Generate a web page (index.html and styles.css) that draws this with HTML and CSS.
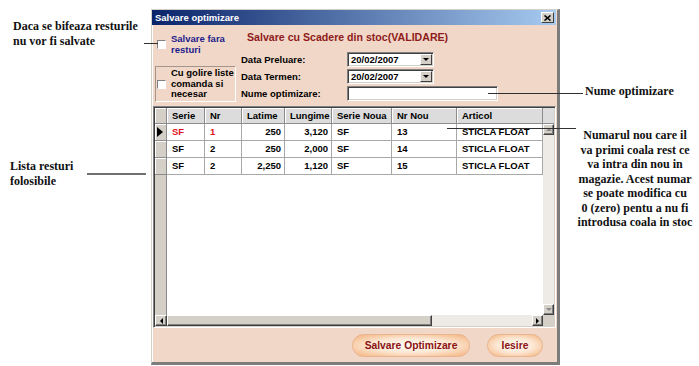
FILE: index.html
```html
<!DOCTYPE html>
<html lang="ro">
<head>
    <meta charset="UTF-8">
    <meta name="viewport" content="width=device-width, initial-scale=1.0">
    <title>Salvare optimizare</title>
    <link rel="stylesheet" href="styles.css">
</head>
<body>
    <div class="page">
        <div class="notes-left">
            <p class="note note-check">Daca se bifeaza resturile<br>nu vor fi salvate</p>
            <p class="note note-list">Lista resturi<br>folosibile</p>
        </div>

        <div class="dialog">
            <div class="titlebar">
                <span class="title">Salvare optimizare</span>
                <span class="close">
                    <svg width="7" height="6" viewBox="0 0 7 6">
                        <path d="M0.5 0.5L6.5 5.5M6.5 0.5L0.5 5.5" stroke="#000" stroke-width="1.6"></path>
                    </svg>
                </span>
            </div>

            <div class="top">
                <div class="options">
                    <label class="check check-blue"><span class="box"></span><span>Salvare fara<br>resturi</span></label>
                    <div class="group">
                        <label class="check"><span class="box"></span><span>Cu golire liste<br>comanda si<br>necesar</span></label>
                    </div>
                </div>

                <div class="form">
                    <h2 class="heading">Salvare cu Scadere din stoc(VALIDARE)</h2>
                    <div class="fields">
                        <span class="label">Data Preluare:</span>
                        <div class="field combo"><span>20/02/2007</span><span class="drop"></span></div>
                        <span class="label">Data Termen:</span>
                        <div class="field combo"><span>20/02/2007</span><span class="drop"></span></div>
                        <span class="label">Nume optimizare:</span>
                        <div class="field text-field"></div>
                    </div>
                </div>
            </div>

            <div class="grid">
                <div class="grid-data">
                    <table class="rows">
                        <colgroup>
                            <col style="width: 12px">
                            <col style="width: 38px">
                            <col style="width: 37px">
                            <col style="width: 43px">
                            <col style="width: 47px">
                            <col style="width: 60px">
                            <col style="width: 65px">
                            <col style="width: 86px">
                        </colgroup>
                        <thead>
                            <tr>
                                <th class="sel"></th>
                                <th>Serie</th>
                                <th>Nr</th>
                                <th>Latime</th>
                                <th>Lungime</th>
                                <th>Serie Noua</th>
                                <th>Nr Nou</th>
                                <th>Articol</th>
                            </tr>
                        </thead>
                        <tbody>
                            <tr>
                                <td class="sel"><span class="pointer"></span></td>
                                <td class="red">SF</td>
                                <td class="red">1</td>
                                <td class="num">250</td>
                                <td class="num">3,120</td>
                                <td>SF</td>
                                <td>13</td>
                                <td>STICLA FLOAT</td>
                            </tr>
                            <tr>
                                <td class="sel"></td>
                                <td>SF</td>
                                <td>2</td>
                                <td class="num">250</td>
                                <td class="num">2,000</td>
                                <td>SF</td>
                                <td>14</td>
                                <td>STICLA FLOAT</td>
                            </tr>
                            <tr>
                                <td class="sel"></td>
                                <td>SF</td>
                                <td>2</td>
                                <td class="num">2,250</td>
                                <td class="num">1,120</td>
                                <td>SF</td>
                                <td>15</td>
                                <td>STICLA FLOAT</td>
                            </tr>
                        </tbody>
                    </table>
                </div>

                <div class="vscroll">
                    <div class="vhead"></div>
                    <span class="sb-btn"><span class="arr arr-up"></span></span>
                    <div class="track"></div>
                    <span class="sb-btn"><span class="arr arr-down"></span></span>
                </div>

                <div class="hscroll">
                    <span class="sb-btn sb-wide"><span class="arr arr-left"></span></span>
                    <div class="thumb"></div>
                    <div class="track"></div>
                    <span class="sb-btn"><span class="arr arr-right"></span></span>
                </div>

                <div class="corner"></div>
            </div>

            <div class="footer">
                <button class="pill pill-save">Salvare Optimizare</button>
                <button class="pill pill-exit">Iesire</button>
            </div>
        </div>

        <div class="notes-right">
            <p class="note note-name">Nume optimizare</p>
            <p class="note note-nr">Numarul nou care il<br>va primi coala rest ce<br>va intra din nou in<br>magazie. Acest numar<br>se poate modifica cu<br>0 (zero) pentu a nu fi<br>introdusa coala in stoc</p>
        </div>

        <!-- callout lines -->
        <div class="callout callout-check"></div>
        <div class="callout callout-name"></div>
        <div class="callout callout-nr"></div>
        <div class="callout callout-list"></div>
    </div>
</body>
</html>
```

FILE: styles.css
```css
* {
    margin: 0;
    padding: 0;
    box-sizing: border-box;
}

body {
    background: #fff;
    font-family: "Liberation Sans", Arial, sans-serif;
    color: #000;
}

.page {
    position: relative;
    display: flex;
    width: 699px;
    height: 366px;
    overflow: hidden;
}

/* annotations */
.note {
    font-family: "Liberation Serif", "Times New Roman", serif;
    font-weight: bold;
    font-size: 12px;
    line-height: 15px;
    color: #111;
    white-space: nowrap;
}

.notes-left {
    width: 151px;
    flex: none;
    padding-left: 10px;
}

.note-check {
    margin-top: 19px;
    margin-left: 3px;
}

.note-list {
    margin-top: 110px;
}

.notes-right {
    flex: 1;
    padding-left: 25px;
}

.note-name {
    margin-top: 84px;
}

.note-nr {
    margin-top: 29px;
    margin-left: -10px;
    width: 120px;
    text-align: center;
    line-height: 14.5px;
}

.callout {
    position: absolute;
    height: 1px;
    background: #303030;
}

.callout-check { left: 144px; top: 43px; width: 14px; }
.callout-name { left: 488px; top: 93px; width: 95px; }
.callout-nr { left: 447px; top: 128px; width: 129px; }
.callout-list { left: 87px; top: 173px; width: 59px; height: 2px; background: #707070; }

/* dialog window */
.dialog {
    flex: none;
    width: 409px;
    height: 356px;
    margin-top: 9px;
    display: flex;
    flex-direction: column;
    background: #f1d7c7;
    border-style: solid;
    border-width: 1px 3px 3px 1px;
    border-color: #d4d0c8 #7c7c7c #7c7c7c #d4d0c8;
    box-shadow: inset 1px 1px 0 #fff;
    font-size: 9.5px;
    font-weight: bold;
}

.titlebar {
    height: 15px;
    margin-right: 1px;
    display: flex;
    align-items: center;
    justify-content: space-between;
    padding: 0 2px 0 3px;
    background: linear-gradient(to right, #0a246a, #a6caf0);
}

.title {
    color: #fff;
    font-size: 9.5px;
}

.close {
    width: 13px;
    height: 11px;
    display: flex;
    align-items: center;
    justify-content: center;
    background: #d4d0c8;
    border: 1px solid;
    border-color: #fff #404040 #404040 #fff;
}

.top {
    height: 81px;
    flex: none;
    display: flex;
    padding-left: 3px;
}

.options {
    width: 82px;
    padding-top: 9px;
}

.check {
    display: flex;
    align-items: center;
    gap: 5px;
    line-height: 10.5px;
}

.check-blue {
    color: #1c1c8c;
}

.box {
    width: 9px;
    height: 9px;
    flex: none;
    margin-left: 2px;
    background: #fff;
    border: 1px solid;
    border-color: #808080 #fff #fff #808080;
}

.group {
    margin-top: 11px;
    width: 81px;
    height: 36px;
    display: flex;
    align-items: center;
    border: 1px solid;
    border-color: #a4948a #fff #fff #a4948a;
}

.group .box {
    margin-left: 1px;
}

.form {
    margin-left: 4px;
    padding-top: 6px;
}

.heading {
    margin-left: 6px;
    margin-bottom: 8px;
    font-size: 10.6px;
    line-height: 13px;
    color: #8e1b1b;
    white-space: nowrap;
}

.fields {
    display: grid;
    grid-template-columns: 106px auto;
    grid-auto-rows: 15px;
    row-gap: 2px;
    align-items: center;
}

.field {
    height: 15px;
    display: flex;
    align-items: center;
    background: #fff;
    border: 1px solid;
    border-color: #808080 #fff #fff #808080;
    box-shadow: inset 1px 1px 0 #404040, inset -1px -1px 0 #d4d0c8;
}

.combo {
    width: 87px;
    justify-content: space-between;
    padding: 0 1px 0 3px;
}

.text-field {
    width: 151px;
}

.drop {
    width: 12px;
    height: 11px;
    display: flex;
    align-items: center;
    justify-content: center;
    background: #d4d0c8;
    border: 1px solid;
    border-color: #fff #404040 #404040 #fff;
}

.drop::after {
    content: "";
    border-left: 3px solid transparent;
    border-right: 3px solid transparent;
    border-top: 3px solid #000;
}

/* data grid */
.grid {
    flex: none;
    margin-left: 1px;
    width: 403px;
    height: 222px;
    padding: 1px;
    display: grid;
    grid-template-columns: 388px 11px;
    grid-template-rows: 207px 11px;
    border: 1px solid;
    border-color: #808080 #fff #fff #808080;
    box-shadow: inset 1px 1px 0 #404040, inset -1px -1px 0 #d4d0c8;
}

.grid-data {
    overflow: hidden;
    background: linear-gradient(to right, #d4d0c8 11px, #8c8c8c 11px, #8c8c8c 12px, #fff 12px);
}

.rows {
    width: 388px;
    table-layout: fixed;
    border-collapse: separate;
    border-spacing: 0;
    font-size: 9.5px;
}

.rows th {
    padding: 0 5px;
    line-height: 15px;
    text-align: left;
    white-space: nowrap;
    overflow: hidden;
    background: #dcdcdc;
    border-right: 1px solid #8c8c8c;
    border-bottom: 1px solid #8c8c8c;
    box-shadow: inset 1px 1px 0 #fff;
}

.rows td {
    padding: 0 5px;
    line-height: 16px;
    white-space: nowrap;
    overflow: hidden;
    background: #fff;
    border-right: 1px solid #a8a8a8;
    border-bottom: 1px solid #a8a8a8;
}

.rows td.num {
    text-align: right;
    padding-right: 3px;
}

.rows .sel {
    padding: 0;
    background: #d4d0c8;
    border-color: #8c8c8c;
    box-shadow: inset 1px 1px 0 #fff;
}

.rows td.red {
    color: #e0141e;
}

.pointer {
    display: block;
    width: 0;
    height: 0;
    margin-left: 2px;
    border-top: 5px solid transparent;
    border-bottom: 5px solid transparent;
    border-left: 6px solid #000;
}

.vscroll {
    display: flex;
    flex-direction: column;
}

.vhead {
    height: 16px;
    background: #dcdcdc;
    border-bottom: 1px solid #8c8c8c;
}

.track {
    flex: 1;
    background: #eeebe6;
}

.sb-btn {
    flex: none;
    width: 11px;
    height: 11px;
    display: flex;
    align-items: center;
    justify-content: center;
    background: #d4d0c8;
    border: 1px solid;
    border-color: #fff #404040 #404040 #fff;
    box-shadow: inset -1px -1px 0 #808080;
}

.sb-wide {
    width: 12px;
}

.hscroll {
    display: flex;
}

.thumb {
    width: 265px;
    background: #d4d0c8;
    border: 1px solid;
    border-color: #fff #404040 #404040 #fff;
    box-shadow: inset -1px -1px 0 #808080;
}

.corner {
    background: #d4d0c8;
}

.arr {
    width: 0;
    height: 0;
}

.arr-up { border-left: 3px solid transparent; border-right: 3px solid transparent; border-bottom: 3px solid #8a8a8a; }
.arr-down { border-left: 3px solid transparent; border-right: 3px solid transparent; border-top: 3px solid #8a8a8a; }
.arr-left { border-top: 3px solid transparent; border-bottom: 3px solid transparent; border-right: 3px solid #000; }
.arr-right { border-top: 3px solid transparent; border-bottom: 3px solid transparent; border-left: 3px solid #000; }

/* footer buttons */
.footer {
    flex: 1;
    display: flex;
    justify-content: flex-end;
    align-items: flex-start;
    gap: 17px;
    padding: 6px 14px 0 0;
}

.pill {
    height: 23px;
    border-radius: 12px;
    border: 1px solid #e9b48e;
    background: radial-gradient(ellipse at 50% 50%, #fffdf9 0%, #fce6d2 50%, #f3b27b 100%);
    font-family: inherit;
    font-weight: bold;
    font-size: 10.3px;
    color: #8a1212;
    cursor: pointer;
}

.pill-save {
    width: 118px;
}

.pill-exit {
    width: 56px;
}
```
